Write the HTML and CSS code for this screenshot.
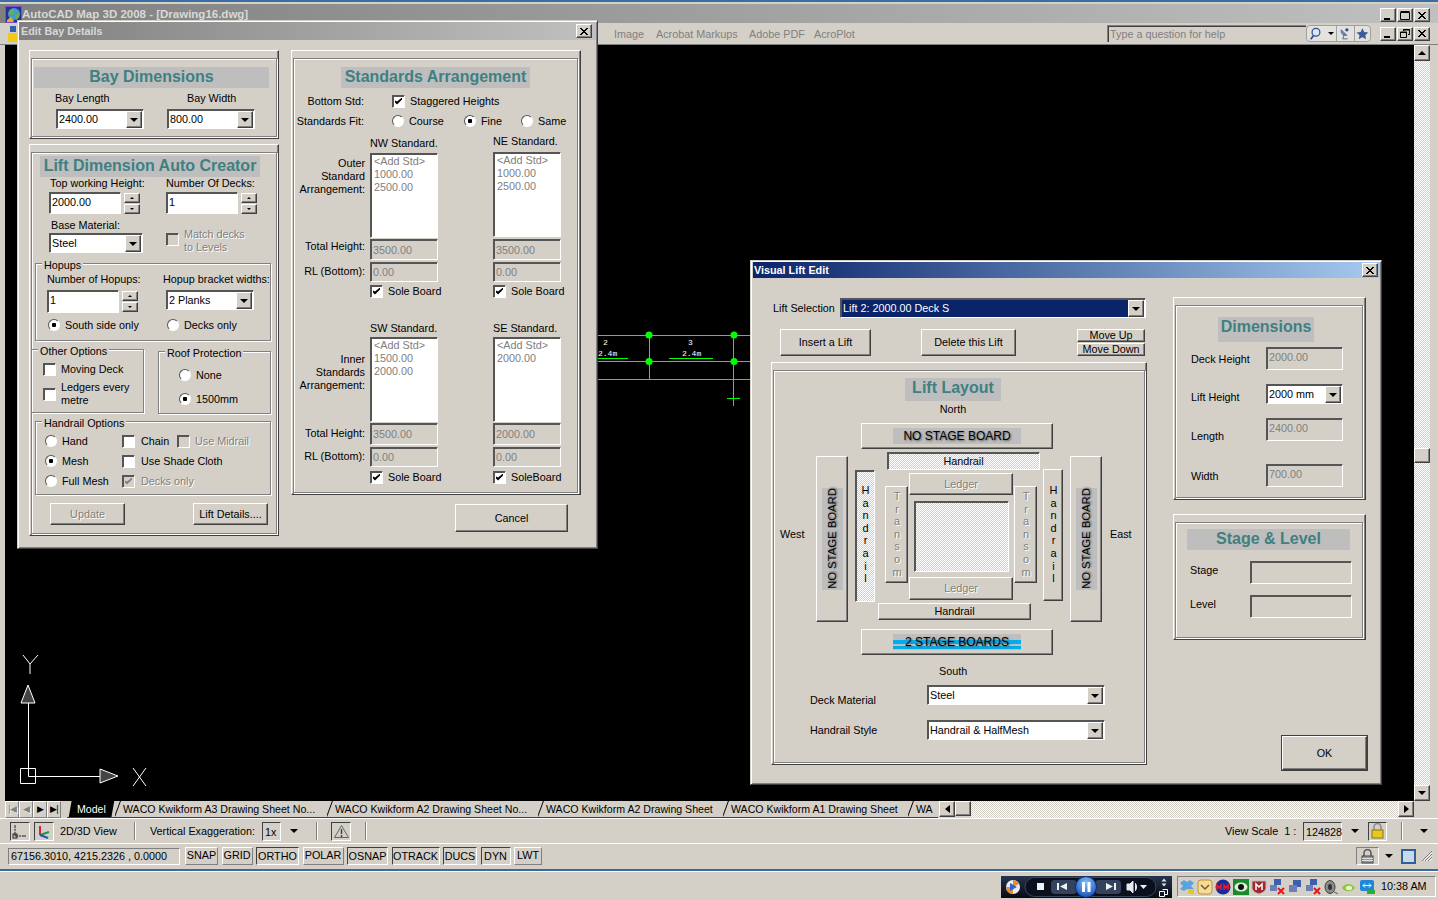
FILE: index.html
```html
<!DOCTYPE html>
<html lang="en">
<head>
    <meta charset="UTF-8">
    <title>AutoCAD Map 3D 2008 - [Drawing16.dwg]</title>
    <link rel="stylesheet" href="styles.css">
</head>
<body>

<svg class="defs" width="0" height="0">
    <symbol id="g-close" viewBox="0 0 10 9"><path d="M1 1l7 7M2 1l7 7M8 1L1 8M9 1L2 8" stroke="#000" fill="none"/></symbol>
    <symbol id="g-min" viewBox="0 0 10 9"><path d="M1 7h6v2H1z"/></symbol>
    <symbol id="g-max" viewBox="0 0 10 9"><path d="M0.5 1.5h9v7h-9zM0.5 0.5h9" stroke="#000" fill="none"/></symbol>
    <symbol id="g-restore" viewBox="0 0 10 9"><path d="M3.5 2V0.5h6v5H8M0.5 3h6v5.5h-6zM0.5 3.5h6M3.5 1h6" stroke="#000" fill="none"/></symbol>
</svg>

<div class="app">
    <div class="app-title">
        <svg class="app-icon" width="17" height="17" viewBox="0 0 17 17">
            <rect x="0.5" y="0.5" width="16" height="16" fill="#2b2f8f" stroke="#7b4fc9"/>
            <circle cx="9" cy="8" r="6" fill="#3f9ad6"/>
            <path d="M5 4c3-2 5 0 4 3s-4 2-5 1zM10 9l4-2v4l-3 3z" fill="#6ab04c"/>
            <path d="M2 14l4-3 3 4-1 1H2z" fill="#e8b020"/>
        </svg>
        <span class="app-name">AutoCAD Map 3D 2008 - [Drawing16.dwg]</span>
        <div class="win-btns">
            <span class="up win-btn"><svg width="10" height="9"><use href="#g-min"/></svg></span>
            <span class="up win-btn"><svg width="10" height="9"><use href="#g-max"/></svg></span>
            <span class="up win-btn"><svg width="10" height="9"><use href="#g-close"/></svg></span>
        </div>
    </div>

    <div class="menu-row">
        <svg class="menu-icon" width="10" height="16" viewBox="0 0 10 16"><path d="M0 7h10v9H0z" fill="#f2c81e"/><path d="M2 0h6v6H2z" fill="#2f5fb0"/></svg>
        <span class="menu-item m-image">Image</span>
        <span class="menu-item m-acro">Acrobat Markups</span>
        <span class="menu-item m-pdf">Adobe PDF</span>
        <span class="menu-item m-plot">AcroPlot</span>
        <div class="help-box">Type a question for help</div>
        <div class="help-pill">
            <svg width="20" height="15" viewBox="0 0 20 15"><circle cx="8" cy="6" r="4.5" fill="#dce8f8" stroke="#2d4f92" stroke-width="1.4"/><path d="M5 10l-3 4" stroke="#2d4f92" stroke-width="2"/></svg>
            <i class="tri tri-sm"></i>
            <svg class="pill-sep" width="18" height="15" viewBox="0 0 18 15"><path d="M5 2a6 6 0 0 0 8 8z" fill="#6d83b5"/><path d="M9 8l-2 6h6" stroke="#41557f" fill="none"/><circle cx="12" cy="3" r="2" fill="#2d4f92"/></svg>
            <svg class="pill-sep" width="18" height="15" viewBox="0 0 18 15"><path d="M9 1l2.2 4.6 5 .6-3.7 3.4 1 5L9 12.2 4.500 14.600l1-5L1.800 6.200l5-.6z" fill="#3d5c9c"/></svg>
        </div>
        <div class="win-btns">
            <span class="up win-btn"><svg width="10" height="9"><use href="#g-min"/></svg></span>
            <span class="up win-btn"><svg width="10" height="9"><use href="#g-restore"/></svg></span>
            <span class="up win-btn"><svg width="10" height="9"><use href="#g-close"/></svg></span>
        </div>
    </div>

    <div class="work">
        <svg class="drawing" viewBox="5 44 1409 756">
            <g class="ucs">
                <path d="M23 654l7 9 8-9M30 663v10M133 767l13 18M146 767l-13 18"/>
                <path class="ucs-arrow" d="M28 684l-7 18h14zM100 768v14l18-7z"/>
                <path d="M20.500 767.500h15v15h-15zM28.500 702v73.500H100"/>
            </g>
            <g class="green">
                <path d="M598 334.500h152M598 360.500h152M598 378.500h152M649.500 334v44M733.500 334v71M727 397.500h13M598 357.500h30M669 357.500h44"/>
                <circle cx="649" cy="334" r="3.500"/><circle cx="649" cy="360.500" r="3.500"/>
                <circle cx="734" cy="334" r="3.500"/><circle cx="734" cy="360.500" r="3.500"/>
            </g>
            <g class="dwg-text">
                <text x="603" y="344">2</text><text x="688" y="344">3</text>
                <text x="598" y="355">2.4m</text><text x="682" y="355">2.4m</text>
            </g>
        </svg>
        <div class="vscroll">
            <span class="up sb-btn"><i class="tri tri-up"></i></span>
            <div class="sb-track"><span class="up sb-thumb"></span></div>
            <span class="up sb-btn"><i class="tri"></i></span>
        </div>
    </div>

    <div class="tabs-row">
        <span class="nav-btn off">|◀</span><span class="nav-btn off">◀</span><span class="nav-btn">▶</span><span class="nav-btn">▶|</span>
        <div class="tab tab-model">Model</div>
        <div class="tab t-a3">WACO Kwikform A3 Drawing Sheet No...</div>
        <div class="tab t-a2">WACO Kwikform A2 Drawing Sheet No...</div>
        <div class="tab t-a2b">WACO Kwikform A2 Drawing Sheet</div>
        <div class="tab t-a2b">WACO Kwikform A1 Drawing Sheet</div>
        <div class="tab t-wa">WA</div>
        <div class="hscroll">
            <span class="up sb-btn"><i class="tri tri-left"></i></span>
            <span class="up sb-thumb"></span>
            <div class="sb-track"></div>
            <span class="up sb-btn"><i class="tri tri-right"></i></span>
        </div>
    </div>

    <div class="view-bar">
        <span class="tool tool-a"><svg width="16" height="15" viewBox="0 0 16 15"><path d="M3 1v11h11" stroke="#222" fill="none"/><path d="M6 12h1M9 12h1M3 4v1M3 7v1" stroke="#fff"/><rect x="1" y="10" width="4" height="4" fill="none" stroke="#222"/></svg></span>
        <span class="tool tool-b"><svg width="16" height="15" viewBox="0 0 16 15"><path d="M4 2v9" stroke="#d23" stroke-width="2"/><path d="M4 11l9-3" stroke="#1a9a3a" stroke-width="2"/><path d="M4 11l8 3" stroke="#2a4fc0" stroke-width="2"/></svg></span>
        <span class="vb-view">2D/3D View</span>
        <i class="sep"></i>
        <span class="vb-exag">Vertical Exaggeration:</span>
        <span class="down-thin vb-box vb-1x">1x</span>
        <i class="tri vb-arrow"></i>
        <i class="sep sep-a"></i>
        <span class="tool tool-warn"><svg width="17" height="15" viewBox="0 0 17 15"><path d="M8.500 1.500l7 12h-14z" fill="#d4d0c8" stroke="#666"/><path d="M8.500 5v5M8.500 11v2" stroke="#444" stroke-width="1.500"/></svg></span>
        <i class="sep sep-b"></i>
        <div class="vb-right">
            <span class="vb-scale">View Scale&nbsp; 1 :</span>
            <span class="down-thin vb-box vb-num">124828</span>
            <i class="tri vb-arrow"></i>
            <span class="tool tool-lock"><svg width="15" height="16" viewBox="0 0 15 16"><path d="M4 7V4a3.500 3.500 0 0 1 7 0v3" stroke="#8a8a8a" stroke-width="1.500" fill="none"/><rect x="2" y="7" width="11" height="8" fill="#e8c820" stroke="#8a7410"/></svg></span>
            <i class="sep sep-c"></i>
            <i class="tri vb-last"></i>
        </div>
    </div>

    <div class="status-bar">
        <div class="coords">67156.3010, 4215.2326 , 0.0000</div>
        <div class="snaps">
            <span class="snap">SNAP</span>
            <span class="snap">GRID</span>
            <span class="snap on">ORTHO</span>
            <span class="snap">POLAR</span>
            <span class="snap on">OSNAP</span>
            <span class="snap on">OTRACK</span>
            <span class="snap on">DUCS</span>
            <span class="snap on">DYN</span>
            <span class="snap">LWT</span>
        </div>
        <div class="status-right">
            <span class="tool tool-slock"><svg width="15" height="15" viewBox="0 0 15 15"><path d="M4 7V4a3.500 3.500 0 0 1 7 0v3" stroke="#555" stroke-width="1.500" fill="none"/><rect x="2" y="7" width="11" height="7" fill="#9a9a9a" stroke="#444"/><path d="M2 9.500h11M2 11.500h11" stroke="#ddd"/></svg></span>
            <i class="tri st-arrow"></i>
            <span class="st-square"></span>
            <svg class="grip" width="12" height="12" viewBox="0 0 12 12"><path d="M11 1L1 11M11 4l-7 7M11 7l-4 4" stroke="#808080"/><path d="M11 2.500L2.500 11M11 5.500L5.500 11M11 8.500L8.500 11" stroke="#fff"/></svg>
        </div>
    </div>
</div>

<div class="taskbar">
    <svg class="player" width="171" height="22" viewBox="0 0 171 22">
        <defs>
            <linearGradient id="pl-bg" x1="0" y1="0" x2="0" y2="1"><stop offset="0" stop-color="#27344c"/><stop offset="1" stop-color="#060a14"/></linearGradient>
            <radialGradient id="pl-blue" cx="0.500" cy="0.300" r="0.800"><stop offset="0" stop-color="#7fc4ff"/><stop offset="1" stop-color="#0a3fb0"/></radialGradient>
        </defs>
        <rect width="171" height="22" fill="url(#pl-bg)"/>
        <circle cx="12" cy="11" r="7" fill="#e9edf5"/>
        <path d="M12 4a7 7 0 0 1 6 4l-6 3zM5 11a7 7 0 0 0 7 7l0-7z" fill="#f08a1e"/>
        <path d="M9 7l7 4-7 4z" fill="#2a63d8"/>
        <rect x="24" y="1.500" width="131" height="19" rx="9.500" fill="#0a101d" stroke="#3a465c"/>
        <rect x="36" y="7" width="7" height="7" fill="#eef1f5"/>
        <rect x="50" y="4" width="26" height="14" rx="4" fill="#34435d"/>
        <path d="M58 7v7h-2V7zM66 7v7l-7-3.500z" fill="#eef1f5"/>
        <rect x="94" y="4" width="26" height="14" rx="4" fill="#34435d"/>
        <path d="M105 7l7 3.500-7 3.500zM113 7h2v7h-2z" fill="#eef1f5"/>
        <circle cx="85" cy="11" r="10.500" fill="url(#pl-blue)" stroke="#0f2a70"/>
        <path d="M81 6h3v10h-3zM86.500 6h3v10h-3z" fill="#fff"/>
        <path d="M126 8h3l3-3v12l-3-3h-3zM134 7c2 2 2 6 0 8" fill="#e6eaf0" stroke="#e6eaf0"/>
        <path d="M139 9h7l-3.500 4z" fill="#eef1f5"/>
        <path d="M163 2.500l-2.500 3h5zM163 10.500l-2.500-3h5z" fill="#dfe4ec"/>
        <path d="M158.500 15.500h5v5h-5zM161.500 13.500h5v5h-3" stroke="#fff" fill="none"/>
    </svg>
    <div class="tray">
        <svg width="16" height="16" viewBox="0 0 16 16"><path d="M1 4l4-3 3 2 3-2 4 3-3 3 3 3-4 2-3-2-3 2-4-2 3-3z" fill="#5aa3de"/><rect x="9" y="10" width="6" height="5" fill="#e8c820"/></svg>
        <svg width="16" height="16" viewBox="0 0 16 16"><rect x="1" y="1" width="14" height="14" rx="3" fill="#f2dca0" stroke="#c89020"/><path d="M4 6l4 4 4-4" stroke="#805a10" stroke-width="1.500" fill="none"/></svg>
        <svg width="16" height="16" viewBox="0 0 16 16"><circle cx="8" cy="8" r="7.500" fill="#1a2a9a"/><path d="M2 11V6l2 3 2-3v5M9 11V6l2 3 2-3v5" stroke="#f01818" stroke-width="1.500" fill="none"/></svg>
        <svg width="16" height="16" viewBox="0 0 16 16"><rect width="16" height="16" fill="#1a8a2e"/><ellipse cx="8" cy="8" rx="6.500" ry="4.500" fill="#dff2d8"/><circle cx="8" cy="8" r="3" fill="#101010"/></svg>
        <svg width="16" height="16" viewBox="0 0 16 16"><path d="M1 2h14v7c0 3-4 5-7 6-3-1-7-3-7-6z" fill="#a5262c" stroke="#bbb"/><path d="M5 11V5l3 3 3-3v6" stroke="#fff" stroke-width="1.500" fill="none"/></svg>
        <svg width="16" height="16" viewBox="0 0 16 16"><rect x="5" y="0" width="7" height="6" fill="#3f5fae"/><rect x="1" y="6" width="7" height="6" fill="#6a7fb8"/><path d="M9 9l6 6M15 9l-6 6" stroke="#e81818" stroke-width="2"/></svg>
        <svg width="16" height="16" viewBox="0 0 16 16"><rect x="6" y="1" width="8" height="7" fill="#3f5fae"/><rect x="2" y="6" width="8" height="7" fill="#6a7fb8"/></svg>
        <svg width="16" height="16" viewBox="0 0 16 16"><rect x="5" y="0" width="7" height="6" fill="#3f5fae"/><rect x="1" y="6" width="7" height="6" fill="#6a7fb8"/><path d="M9 9l6 6M15 9l-6 6" stroke="#e81818" stroke-width="2"/></svg>
        <svg width="16" height="16" viewBox="0 0 16 16"><ellipse cx="7" cy="8" rx="5" ry="6.500" fill="#8a8a8a" stroke="#444"/><ellipse cx="7" cy="8" rx="2" ry="3" fill="#333"/><path d="M11 13c2 1 3 1 4 2" stroke="#555"/></svg>
        <svg width="16" height="16" viewBox="0 0 18 16"><path d="M1 9c4-6 10-6 15 0-5 5-11 5-15 0z" fill="#8cc63f"/><ellipse cx="9" cy="9" rx="3.500" ry="2.500" fill="#e4f4c8"/></svg>
        <svg width="16" height="16" viewBox="0 0 16 16"><rect x="1" y="1" width="14" height="11" rx="2" fill="#1e88d8"/><path d="M4 6.500h8M6 4.500l-2 2 2 2M10 4.500l2 2-2 2" stroke="#fff" fill="none"/><rect x="8" y="11" width="8" height="4" fill="#2caa3a"/></svg>
        <span class="clock">10:38 AM</span>
    </div>
</div>

<!-- Edit Bay Details -->
<section class="win bay-win">
    <header class="cap cap-off">
        <span>Edit Bay Details</span>
        <span class="up cap-x"><svg width="10" height="9"><use href="#g-close"/></svg></span>
    </header>
    <div class="bay-body">
        <div class="bay-left">
            <div class="panel p-bay"><div class="frame">
                <h2 class="strip s-bay">Bay Dimensions</h2>
                <div class="bay-grid">
                    <span class="l-len">Bay Length</span>
                    <span class="l-wid">Bay Width</span>
                    <div class="combo"><span class="combo-val">2400.00</span><span class="up combo-btn"><i class="tri"></i></span></div>
                    <div class="combo"><span class="combo-val">800.00</span><span class="up combo-btn"><i class="tri"></i></span></div>
                </div>
            </div></div>

            <div class="panel p-lift"><div class="frame">
                <h2 class="strip s-lift">Lift Dimension Auto Creator</h2>
                <div class="auto-grid">
                    <span class="auto-lbl">Top working Height:</span>
                    <span class="auto-lbl2">Number Of Decks:</span>
                    <div class="spinner"><span class="input">2000.00</span><span class="spin"><span class="up"><i class="tri tri-up tri-xs"></i></span><span class="up"><i class="tri tri-xs"></i></span></span></div>
                    <div class="spinner"><span class="input">1</span><span class="spin"><span class="up"><i class="tri tri-up tri-xs"></i></span><span class="up"><i class="tri tri-xs"></i></span></span></div>
                    <span class="auto-base">Base Material:</span>
                    <span></span>
                    <div class="combo c-base"><span class="combo-val">Steel</span><span class="up combo-btn"><i class="tri"></i></span></div>
                    <div class="opt opt-top off"><i class="box"></i><span>Match decks<br>to Levels</span></div>
                </div>

                <fieldset class="grp g-hop">
                    <legend>Hopups</legend>
                    <div class="hop-grid">
                        <span>Number of Hopups:</span>
                        <span>Hopup bracket widths:</span>
                        <div class="spinner"><span class="input i-hop">1</span><span class="spin"><span class="up"><i class="tri tri-up tri-xs"></i></span><span class="up"><i class="tri tri-xs"></i></span></span></div>
                        <div class="combo c-plank"><span class="combo-val">2 Planks</span><span class="up combo-btn"><i class="tri"></i></span></div>
                        <div class="opt opt-a"><i class="radio on"></i><span>South side only</span></div>
                        <div class="opt opt-b"><i class="radio"></i><span>Decks only</span></div>
                    </div>
                </fieldset>

                <div class="grp-pair">
                    <fieldset class="grp g-other">
                        <legend>Other Options</legend>
                        <div class="opt o-move"><i class="box"></i><span>Moving Deck</span></div>
                        <div class="opt o-ledg"><i class="box"></i><span>Ledgers every<br>metre</span></div>
                    </fieldset>
                    <fieldset class="grp g-roof">
                        <legend>Roof Protection</legend>
                        <div class="opt o-none"><i class="radio"></i><span>None</span></div>
                        <div class="opt o-1500"><i class="radio on"></i><span>1500mm</span></div>
                    </fieldset>
                </div>

                <fieldset class="grp g-rail">
                    <legend>Handrail Options</legend>
                    <div class="rail-grid">
                        <div class="opt"><i class="radio"></i><span>Hand</span></div>
                        <div class="opt"><i class="box"></i><span class="gap-chain">Chain</span></div>
                        <div class="opt off"><i class="box"></i><span>Use Midrail</span></div>
                        <div class="opt"><i class="radio on"></i><span>Mesh</span></div>
                        <div class="opt wide"><i class="box"></i><span class="gap-chain">Use Shade Cloth</span></div>
                        <div class="opt"><i class="radio"></i><span>Full Mesh</span></div>
                        <div class="opt wide off"><i class="box on"></i><span class="gap-chain">Decks only</span></div>
                    </div>
                </fieldset>

                <div class="bay-btns">
                    <span class="up btn b-update off">Update</span>
                    <span class="up btn b-details">Lift Details....</span>
                </div>
            </div></div>
        </div>

        <div class="bay-right">
            <div class="panel p-std"><div class="frame">
                <h2 class="strip s-std">Standards Arrangement</h2>
                <div class="std-top">
                    <span class="std-lbl">Bottom Std:</span>
                    <div class="opt wide"><i class="box on"></i><span>Staggered Heights</span></div>
                    <span class="std-lbl">Standards Fit:</span>
                    <div class="opt"><i class="radio"></i><span>Course</span></div>
                    <div class="opt"><i class="radio on"></i><span>Fine</span></div>
                    <div class="opt"><i class="radio"></i><span>Same</span></div>
                </div>

                <div class="std-grid">
                    <div class="std-lbls">
                        <div class="std-block">Outer<br>Standard<br>Arrangement:</div>
                        <div class="std-tot">Total Height:</div>
                        <div class="std-rl">RL (Bottom):</div>
                    </div>
                    <div class="std-col">
                        <span class="std-head">NW Standard.</span>
                        <div class="list">&lt;Add Std&gt;<br>1000.00<br>2500.00</div>
                        <span class="input ro">3500.00</span>
                        <span class="input ro i-rl">0.00</span>
                        <div class="opt opt-sole"><i class="box on"></i><span>Sole Board</span></div>
                    </div>
                    <span></span>
                    <div class="std-col ne">
                        <span class="std-head">NE Standard.</span>
                        <div class="list">&lt;Add Std&gt;<br>1000.00<br>2500.00</div>
                        <span class="input ro">3500.00</span>
                        <span class="input ro i-rl">0.00</span>
                        <div class="opt opt-sole"><i class="box on"></i><span>Sole Board</span></div>
                    </div>
                </div>

                <div class="std-grid low">
                    <div class="std-lbls">
                        <div class="std-block">Inner<br>Standards<br>Arrangement:</div>
                        <div class="std-tot">Total Height:</div>
                        <div class="std-rl">RL (Bottom):</div>
                    </div>
                    <div class="std-col">
                        <span class="std-head">SW Standard.</span>
                        <div class="list">&lt;Add Std&gt;<br>1500.00<br>2000.00</div>
                        <span class="input ro">3500.00</span>
                        <span class="input ro i-rl">0.00</span>
                        <div class="opt opt-sole"><i class="box on"></i><span>Sole Board</span></div>
                    </div>
                    <span></span>
                    <div class="std-col">
                        <span class="std-head">SE Standard.</span>
                        <div class="list">&lt;Add Std&gt;<br>2000.00</div>
                        <span class="input ro">2000.00</span>
                        <span class="input ro i-rl">0.00</span>
                        <div class="opt opt-sole"><i class="box on"></i><span>SoleBoard</span></div>
                    </div>
                </div>
            </div></div>
            <span class="up btn b-cancel">Cancel</span>
        </div>
    </div>
</section>

<!-- Visual Lift Edit -->
<section class="win lift-win">
    <header class="cap cap-on">
        <span>Visual Lift Edit</span>
        <span class="up cap-x"><svg width="10" height="9"><use href="#g-close"/></svg></span>
    </header>
    <div class="lift-body">
        <div class="lift-main">
            <div class="sel-row">
                <span class="sel-lbl">Lift Selection</span>
                <div class="combo c-sel"><span class="combo-val sel">Lift 2: 2000.00 Deck S</span><span class="up combo-btn"><i class="tri"></i></span></div>
            </div>
            <div class="lift-btns">
                <span class="up btn b-insert">Insert a Lift</span>
                <span class="up btn b-delete">Delete this Lift</span>
                <div class="move-btns">
                    <span class="up btn">Move Up</span>
                    <span class="up btn">Move Down</span>
                </div>
            </div>

            <div class="panel p-layout"><div class="frame">
                <h2 class="strip s-layout">Lift Layout</h2>
                <div class="north">North</div>
                <div class="plan">
                    <div class="up piece pc-nboard"><span class="bstrip">NO STAGE BOARD</span></div>
                    <div class="well piece pc-nrail">Handrail</div>
                    <div class="up piece pc-wboard"><span class="bstrip vert">NO STAGE BOARD</span></div>
                    <div class="well piece pc-wrail"><span class="upright">Handrail</span></div>
                    <div class="up piece pc-wtrans off"><span class="upright">Transom</span></div>
                    <div class="up piece pc-nledger off">Ledger</div>
                    <div class="well piece pc-deck"></div>
                    <div class="up piece pc-sledger off">Ledger</div>
                    <div class="up piece pc-etrans off"><span class="upright">Transom</span></div>
                    <div class="up piece pc-erail"><span class="upright">Handrail</span></div>
                    <div class="up piece pc-eboard"><span class="bstrip vert">NO STAGE BOARD</span></div>
                    <div class="up piece pc-srail">Handrail</div>
                    <div class="up piece pc-sboard"><span class="bstrip blue">2 STAGE BOARDS</span></div>
                    <span class="piece pc-west">West</span>
                    <span class="piece pc-east">East</span>
                    <span class="piece pc-south">South</span>
                </div>
                <div class="mat-grid">
                    <span class="m-deck">Deck Material</span>
                    <div class="combo"><span class="combo-val">Steel</span><span class="up combo-btn"><i class="tri"></i></span></div>
                    <span class="m-rail">Handrail Style</span>
                    <div class="combo"><span class="combo-val">Handrail &amp; HalfMesh</span><span class="up combo-btn"><i class="tri"></i></span></div>
                </div>
            </div></div>
        </div>

        <div class="lift-side">
            <div class="panel p-dims"><div class="frame">
                <h2 class="strip s-dims">Dimensions</h2>
                <div class="dim-row d-deck"><span>Deck Height</span><span class="input ro">2000.00</span></div>
                <div class="dim-row d-lift"><span>Lift Height</span><div class="combo"><span class="combo-val">2000 mm</span><span class="up combo-btn"><i class="tri"></i></span></div></div>
                <div class="dim-row d-len"><span>Length</span><span class="input ro">2400.00</span></div>
                <div class="dim-row d-wid"><span>Width</span><span class="input ro">700.00</span></div>
            </div></div>
            <div class="panel p-stage"><div class="frame">
                <h2 class="strip s-stage">Stage &amp; Level</h2>
                <div class="stage-row"><span>Stage</span><span class="input ro"></span></div>
                <div class="stage-row"><span>Level</span><span class="input ro"></span></div>
            </div></div>
            <span class="up btn b-ok">OK</span>
        </div>
    </div>
</section>

</body>
</html>
```

FILE: styles.css
```css
* {
    box-sizing: border-box;
}

html,
body {
    margin: 0;
    width: 1438px;
    height: 900px;
    overflow: hidden;
}

body {
    position: relative;
    background-color: #d4d0c8;
    color: #000;
    font: 10.800px/13px "Liberation Sans", Arial, sans-serif;
}

.defs {
    position: absolute;
}

i {
    display: block;
    font-style: normal;
}

/* shared 3d edges */
.up {
    background-color: #d4d0c8;
    border: 1px solid;
    border-color: #fff #404040 #404040 #fff;
    box-shadow: inset -1px -1px 0 #808080;
    display: flex;
    align-items: center;
    justify-content: center;
}

.input,
.combo,
.list,
.well {
    border: 1px solid;
    border-color: #555 #fff #fff #555;
    box-shadow: inset 1px 1px 0 #555;
}

.off,
.off span {
    color: #808080;
    text-shadow: 1px 1px 0 #fff;
}

.tri {
    width: 0;
    height: 0;
    border-left: 4px solid transparent;
    border-right: 4px solid transparent;
    border-top: 4px solid #000;
}

.tri-up {
    border-top: 0;
    border-bottom: 4px solid #000;
}

.tri-left {
    border: 4px solid transparent;
    border-left: 0;
    border-right: 5px solid #000;
}

.tri-right {
    border: 4px solid transparent;
    border-right: 0;
    border-left: 5px solid #000;
}

.tri-xs {
    border-left-width: 2px;
    border-right-width: 2px;
    border-top-width: 2px;
}

.tri-xs.tri-up {
    border-top-width: 0;
    border-bottom-width: 2px;
}

.tri-sm {
    border-left-width: 3px;
    border-right-width: 3px;
    border-top-width: 3px;
}

/* main window */
.app {
    height: 869px;
    display: flex;
    flex-direction: column;
    border-top: 2px solid #3a6ea5;
}

.app-title {
    flex: 0 0 18px;
    margin-top: 2px;
    padding: 0 8px 0 5px;
    display: flex;
    align-items: center;
    background: linear-gradient(90deg, #808080, #c0c0c0);
}

.app-icon {
    margin-top: 2px;
}

.app-name {
    padding-top: 2px;
    color: #d8d8d8;
    font-weight: bold;
    font-size: 11.500px;
}

.win-btns {
    margin-left: auto;
    display: flex;
    gap: 1px;
}

.app-title .win-btns {
    margin-top: 3px;
}

.win-btn {
    width: 16px;
    height: 14px;
}

.menu-row {
    flex: 0 0 21px;
    padding: 0 8px 0 8px;
    display: flex;
    align-items: center;
    color: #808080;
    white-space: nowrap;
}

.menu-item {
    padding-top: 1px;
}

.m-image { margin-left: 596px; width: 42px; }
.m-acro { width: 93px; }
.m-pdf { width: 65px; }

.help-box {
    margin-left: auto;
    width: 199px;
    height: 17px;
    padding: 2px 2px;
    border: 1px solid #808080;
    border-right: 0;
    border-bottom: 0;
    box-shadow: inset 1px 1px 0 #404040;
}

.help-pill {
    width: 65px;
    height: 17px;
    display: flex;
    align-items: center;
    gap: 2px;
    padding-left: 2px;
    border: 1px solid #a0a0a0;
    border-radius: 4px;
    background: #e4e2dc;
}

.pill-sep {
    border-left: 1px solid #a0a0a0;
}

.help-pill + .win-btns {
    margin-left: 9px;
}

.work {
    flex: 0 0 757px;
    display: flex;
    padding: 0 8px 0 5px;
    border-top: 1px solid #808080;
}

.drawing {
    flex: 1;
    display: block;
    height: 756px;
    background: #000;
}

.ucs {
    stroke: #fff;
    fill: none;
}

.ucs .ucs-arrow {
    fill: #444;
}

.green {
    stroke: #0f0;
    fill: none;
}

.green circle {
    fill: #0f0;
    stroke: none;
}

.dwg-text {
    fill: #fff;
    font: 8px "Liberation Mono", monospace;
}

.vscroll {
    width: 16px;
    height: 756px;
    display: flex;
    flex-direction: column;
}

.sb-btn {
    flex: 0 0 16px;
    height: 16px;
}

.sb-track {
    flex: 1;
    background: repeating-conic-gradient(#fff 0 25%, #d4d0c8 0 50%) 0 0 / 2px 2px;
}

.vscroll .sb-track {
    padding-top: 387px;
}

.sb-thumb {
    display: block;
    width: 16px;
    height: 15px;
}

.tabs-row {
    flex: 0 0 17px;
    padding-left: 5px;
    display: flex;
    align-items: stretch;
}

.nav-btn {
    width: 14px;
    border: 1px solid #808080;
    border-color: #fff #808080 #808080 #fff;
    font-size: 9px;
    text-align: center;
    line-height: 15px;
    letter-spacing: -1px;
}

.nav-btn.off {
    color: #808080;
}

.tab {
    position: relative;
    padding: 2px 0 0 8px;
    border-bottom: 1px solid #404040;
    font-size: 10.600px;
    white-space: nowrap;
    overflow: hidden;
}

.tab::before {
    content: "";
    position: absolute;
    left: 2px;
    top: -1px;
    bottom: -1px;
    border-left: 1px solid #000;
    transform: skewX(-20deg);
}

.tab-model {
    margin-left: 6px;
    width: 48px;
    padding-left: 10px;
    background: linear-gradient(100deg, transparent 8%, #000 10%, #000 92%, transparent 94%);
    color: #fff;
}

.tab-model::before {
    display: none;
}

.t-a3 { width: 212px; }
.t-a2 { width: 211px; }
.t-a2b { width: 185px; }
.t-wa { width: 30px; }

.hscroll {
    width: 475px;
    display: flex;
    margin-left: 1px;
}

.hscroll .sb-btn {
    width: 16px;
}

.view-bar {
    flex: 0 0 26px;
    padding-left: 10px;
    display: flex;
    align-items: center;
    border-top: 1px solid #fff;
    border-bottom: 1px solid #fff;
}

.tool {
    width: 20px;
    height: 19px;
    display: flex;
    align-items: center;
    justify-content: center;
    border: 1px solid;
    border-color: #404040 #fff #fff #404040;
}

.tool-b { margin-left: 4px; }
.vb-view { margin-left: 6px; width: 74px; }
.sep { width: 1px; height: 18px; background: #808080; box-shadow: 1px 0 0 #fff; }
.vb-exag { margin-left: 15px; width: 112px; }

.down-thin,
.coords {
    border: 1px solid;
    border-color: #404040 #fff #fff #404040;
}

.vb-box {
    height: 19px;
    padding: 3px 2px;
}

.vb-1x { width: 19px; }
.vb-num { width: 39px; }
.vb-arrow { margin-left: 9px; }
.sep-a { margin-left: 18px; }
.tool-warn { margin-left: 14px; }
.sep-b { margin-left: 14px; }

.vb-right {
    margin-left: auto;
    padding-right: 10px;
    display: flex;
    align-items: center;
}

.vb-scale { width: 78px; }
.tool-lock { margin-left: 9px; width: 19px; }
.sep-c { margin-left: 14px; }
.vb-last { margin-left: 18px; }

.status-bar {
    flex: 0 0 26px;
    padding: 0 5px 2px 8px;
    display: flex;
    align-items: center;
}

.coords {
    width: 172px;
    height: 17px;
    padding: 1px 2px;
    border-color: #808080 #fff #fff #808080;
}

.snaps {
    margin-left: 5px;
    display: grid;
    grid-template-columns: 33px 31px 43px 41px 41px 48px 34px 30px 28px;
    column-gap: 3.500px;
}

.snap {
    height: 18px;
    line-height: 15px;
    text-align: center;
    border: 1px solid;
    border-color: #fff #808080 #808080 #fff;
}

.snap.on {
    border-color: #404040 #fff #fff #404040;
    line-height: 17px;
}

.status-right {
    margin-left: auto;
    display: flex;
    align-items: center;
}

.tool-slock { width: 23px; height: 18px; border-color: #808080 #fff #fff #808080; }
.st-arrow { margin-left: 6px; }

.st-square {
    margin-left: 8px;
    width: 15px;
    height: 15px;
    border: 2px solid #2d5f9a;
    background: #c7d8ea;
}

.grip { margin-left: 5px; }

.taskbar {
    height: 31px;
    padding: 5px 2px 0 0;
    display: flex;
    justify-content: flex-end;
    align-items: flex-start;
    border-top: 2px solid #3a6a9e;
    box-shadow: inset 0 1px 0 #fff;
}

.player {
    display: block;
}

.tray {
    margin-left: 5px;
    width: 259px;
    height: 21px;
    padding: 2px 0 0 1px;
    display: flex;
    gap: 2px;
    border: 1px solid;
    border-color: #808080 #fff #fff #808080;
    white-space: nowrap;
}

.tray svg {
    flex: none;
}

.clock {
    margin-left: 4px;
    line-height: 15px;
}

/* dialogs */
.win {
    position: absolute;
    background: #d4d0c8;
    border: 1px solid;
    border-color: #d4d0c8 #404040 #404040 #d4d0c8;
    box-shadow: inset 1px 1px 0 #fff, inset -1px -1px 0 #808080;
}

.cap {
    display: flex;
    align-items: center;
    justify-content: space-between;
    font-weight: bold;
    padding: 0 2px 0 2px;
}

.cap-off {
    height: 18px;
    padding-right: 4px;
    color: #d8d8d8;
    background: linear-gradient(90deg, #808080, #c0c0c0);
}

.cap-on {
    height: 16px;
    padding-left: 1px;
    color: #fff;
    background: linear-gradient(90deg, #0a246a, #a6caf0);
}

.cap-x {
    width: 16px;
    height: 14px;
}

.panel {
    border-top: 1px solid #fff;
    border-left: 1px solid #fff;
    border-right: 1px solid #404040;
    border-bottom: 1px solid #404040;
    padding: 7px 1px 1px 1px;
    box-shadow: inset -1px -1px 0 #808080;
}

.frame {
    height: 100%;
    border: 1px solid #808080;
    box-shadow: inset 1px 1px 0 #fff, 1px 1px 0 #fff;
}

.strip {
    margin: 0;
    height: 21px;
    background: #bebebe;
    color: #408080;
    font: bold 16px/19px "Liberation Sans", Arial, sans-serif;
    text-align: center;
}

.combo {
    height: 20px;
    display: flex;
    background: #fff;
    padding: 1px 1px 0 1px;
}

.combo-val {
    flex: 1;
    padding: 2px 0 0 1px;
    white-space: nowrap;
    overflow: hidden;
}

.combo-btn {
    width: 16px;
    height: 17px;
}

.input {
    display: block;
    height: 23px;
    padding: 3px 2px;
    background: #fff;
}

.input.ro {
    background: #d4d0c8;
    color: #808080;
}

.list {
    background: #fff;
    color: #808080;
    padding: 1px 3px;
}

.spinner {
    display: flex;
    gap: 3px;
}

.spin {
    width: 16px;
    display: flex;
    flex-direction: column;
    justify-content: center;
    gap: 1px;
}

.spin .up {
    height: 10px;
}

.opt {
    display: flex;
    align-items: center;
    gap: 5px;
    white-space: nowrap;
}

.box {
    flex: 0 0 13px;
    position: relative;
    height: 13px;
    background: #fff;
    border: 1px solid;
    border-color: #555 #fff #fff #555;
    box-shadow: inset 1px 1px 0 #555;
}

.box.on::after {
    content: "";
    position: absolute;
    left: 2px;
    top: 2px;
    width: 7px;
    height: 7px;
    background: #000;
    clip-path: polygon(0 43%, 0 71%, 29% 100%, 100% 29%, 100% 0, 29% 57%);
}

.off .box {
    background: #d4d0c8;
}

.off .box.on::after {
    background: #808080;
}

.radio {
    flex: 0 0 12px;
    height: 12px;
    border-radius: 50%;
    background: #fff;
    border: 1px solid;
    border-color: #555 #fff #fff #555;
    box-shadow: 0 0 0 0.500px #d4d0c8;
}

.radio.on {
    background: radial-gradient(circle, #000 0 2px, #fff 2.500px);
}

.btn {
    text-align: center;
}

/* edit bay dialog */
.bay-win {
    left: 17px;
    top: 20px;
    width: 581px;
    height: 529px;
    padding: 1px;
}

.bay-body {
    padding: 10px 0 0 10px;
    display: flex;
    gap: 12px;
}

.bay-left {
    width: 250px;
}

.p-bay {
    height: 89px;
}

.s-bay {
    margin: 8px 7px 0 2px;
}

.bay-grid {
    margin-top: 4px;
    padding-left: 24px;
    display: grid;
    grid-template-columns: 88px 88px;
    column-gap: 23px;
    row-gap: 4px;
}

.l-len { margin-left: -1px; }
.l-wid { margin-left: 20px; }

.p-lift {
    margin-top: 5px;
    height: 392px;
}

.s-lift {
    margin: 3px 16px 0 8px;
}

.auto-grid {
    padding-left: 17px;
    display: grid;
    grid-template-columns: 117px 1fr;
    grid-template-rows: 15px 22px 20px 20px;
}

.auto-lbl { margin-left: 1px; }

.auto-grid .input {
    width: 72px;
    height: 22px;
}

.auto-base {
    margin: 5px 0 0 2px;
}

.auto-grid .combo {
    margin-top: -1px;
}

.c-base {
    width: 94px;
}

.opt-top {
    align-items: flex-start;
    margin-top: -1px;
}

.opt-top span {
    margin-top: -5px;
}

.grp {
    margin: 0;
    padding: 0;
    border: 1px solid #808080;
    box-shadow: 1px 1px 0 #fff, inset 1px 1px 0 #fff;
}

.grp legend {
    margin-left: 6px;
    padding: 4px 2px 0;
    background: linear-gradient(transparent 4px, #d4d0c8 4px);
    line-height: 13px;
}

.g-hop {
    margin: 1px 0 0 3px;
    width: 236px;
    height: 86px;
}

.hop-grid {
    padding-left: 11px;
    display: grid;
    grid-template-columns: 116px 1fr;
}

.hop-grid > span {
    white-space: nowrap;
    margin-top: 1px;
    height: 17px;
}

.i-hop {
    width: 72px;
}

.c-plank {
    margin-left: 3px;
    width: 88px;
}

.opt-a { margin: 4px 0 0 1px; height: 16px; }
.opt-b { margin: 4px 0 0 4px; height: 16px; }

.grp-pair {
    height: 72px;
    display: flex;
    gap: 14px;
    margin-left: -1px;
}

.g-other {
    width: 113px;
    height: 72px;
    padding-left: 11px;
}

.grp.g-other legend {
    margin-left: -5px;
}

.g-roof {
    margin-top: 2px;
    width: 113px;
    height: 71px;
    padding-left: 20px;
}

.grp.g-roof legend {
    margin-left: -14px;
}

.o-move { margin-top: 4px; height: 14px; }
.o-ledg { margin-top: 5px; height: 26px; }
.o-none { margin-top: 8px; height: 14px; }
.o-1500 { margin-top: 10px; height: 14px; }

.g-rail {
    margin-left: 3px;
    width: 236px;
    height: 82px;
}

.rail-grid {
    margin-top: 1px;
    padding-left: 9px;
    display: grid;
    grid-template-columns: 77px 55px 1fr;
    grid-auto-rows: 20px;
}

.rail-grid .wide {
    grid-column: span 2;
}

.gap-chain {
    margin-left: 1px;
}

.bay-btns {
    margin-top: 8px;
    padding-left: 18px;
    display: flex;
    gap: 68px;
}

.bay-btns .btn {
    width: 75px;
    height: 22px;
}

.bay-right {
    width: 290px;
}

.p-std {
    height: 445px;
    padding-right: 2px;
}

.s-std {
    margin: 8px 0 0 47px;
    width: 189px;
}

.std-top {
    margin-top: 3px;
    display: grid;
    grid-template-columns: 98px 72px 57px 1fr;
    grid-auto-rows: 20px;
    align-items: center;
}

.std-top .wide {
    grid-column: span 3;
}

.std-lbl {
    padding-right: 28px;
    text-align: right;
    white-space: nowrap;
}

.std-grid {
    margin-top: 6px;
    display: grid;
    grid-template-columns: 76px 68px 55px 68px;
}

.std-grid.low {
    margin-top: 24px;
}

.std-col {
    display: flex;
    flex-direction: column;
}

.std-col.ne {
    margin-top: -2px;
}

.std-head {
    height: 16px;
    white-space: nowrap;
}

.ne .std-head {
    height: 17px;
}

.low .std-head {
    height: 15px;
}

.list {
    height: 85px;
}

.std-col .input {
    height: 21px;
    margin-top: 1px;
    padding: 4px 2px;
}

.ne .input {
    margin-top: 2px;
}

.std-col .i-rl {
    height: 20px;
    margin-top: 2px;
    padding: 3px 2px;
}

.opt-sole {
    margin-top: 2px;
    height: 14px;
}

.low .std-col .input {
    height: 22px;
}

.low .std-col .i-rl {
    height: 20px;
    margin-top: 2px;
}

.low .opt-sole {
    margin-top: 3px;
}

.std-lbls {
    padding: 16px 5px 0 0;
    text-align: right;
    white-space: nowrap;
}

.low .std-lbls {
    padding-top: 15px;
}

.std-block {
    height: 86px;
    padding-top: 4px;
}

.low .std-block {
    padding-top: 16px;
}

.std-tot {
    height: 23px;
    padding-top: 1px;
}

.std-rl {
    padding-top: 3px;
}

.low .std-tot {
    height: 24px;
    padding-top: 4px;
}

.b-cancel {
    margin: 9px 0 0 164px;
    width: 113px;
    height: 28px;
}

/* visual lift dialog */
.lift-win {
    left: 750px;
    top: 260px;
    width: 632px;
    height: 525px;
    padding: 1px 1px 1px 2px;
}

.lift-body {
    padding: 19px 0 0 18px;
    display: flex;
    gap: 26px;
}

.lift-main {
    width: 376px;
}

.sel-row {
    margin-top: 1px;
    display: flex;
    align-items: center;
}

.sel-lbl {
    width: 69px;
    padding-left: 2px;
    white-space: nowrap;
}

.c-sel {
    width: 306px;
}

.combo-val.sel {
    background: #0a246a;
    color: #fff;
}

.lift-btns {
    margin: 11px 0 0 9px;
    height: 27px;
    display: flex;
}

.b-insert { width: 91px; }
.b-delete { margin-left: 50px; width: 95px; }

.move-btns {
    margin-left: 61px;
    width: 68px;
    display: flex;
    flex-direction: column;
    gap: 1px;
}

.move-btns .btn {
    height: 13px;
    line-height: 11px;
}

.p-layout {
    margin-top: 6px;
    height: 403px;
}

.s-layout {
    margin: 7px 0 0 131px;
    width: 96px;
    height: 23px;
}

.north {
    margin: 2px 0 0 131px;
    width: 96px;
    text-align: center;
}

.plan {
    position: relative;
    height: 269px;
}

.piece {
    position: absolute;
}

.well {
    background: repeating-conic-gradient(#fff 0 25%, #d4d0c8 0 50%) 0 0 / 2px 2px;
    text-align: center;
}

.bstrip {
    width: 128px;
    height: 16px;
    background: #bebebe;
    font-size: 12px;
    line-height: 16px;
    text-align: center;
    white-space: nowrap;
    text-shadow: 1px 1px 2px #555;
}

.bstrip.vert {
    width: 21px;
    height: 102px;
    font-size: 11.300px;
    line-height: 21px;
    writing-mode: vertical-rl;
    transform: rotate(180deg);
}

.bstrip.blue {
    background: linear-gradient(#bebebe 0 6px, #00aeef 6px 10px, #bebebe 10px 12px, #00aeef 12px 15px, #bebebe 15px);
}

.upright {
    writing-mode: vertical-rl;
    text-orientation: upright;
    line-height: 13px;
    font-size: 11px;
    letter-spacing: 0.600px;
}

.pc-nboard { left: 87px; top: 7px; width: 192px; height: 26px; }
.pc-nrail { left: 113px; top: 36px; width: 153px; height: 18px; line-height: 16px; }
.pc-wboard { left: 42px; top: 40px; width: 32px; height: 166px; }
.pc-wrail { left: 81px; top: 54px; width: 20px; height: 132px; padding-top: 13px; }
.pc-wtrans { left: 111px; top: 70px; width: 23px; height: 97px; }
.pc-nledger { left: 135px; top: 57px; width: 104px; height: 22px; }
.pc-deck { left: 140px; top: 85px; width: 95px; height: 71px; }
.pc-sledger { left: 135px; top: 161px; width: 104px; height: 23px; }
.pc-etrans { left: 240px; top: 70px; width: 23px; height: 97px; }
.pc-erail { left: 269px; top: 53px; width: 20px; height: 132px; align-items: flex-start; padding-top: 14px; }
.pc-eboard { left: 296px; top: 40px; width: 32px; height: 166px; }
.pc-srail { left: 104px; top: 187px; width: 153px; height: 17px; }
.pc-sboard { left: 87px; top: 213px; width: 192px; height: 26px; }
.pc-west { left: 6px; top: 112px; }
.pc-east { left: 336px; top: 112px; }
.pc-south { left: 165px; top: 249px; }

.pc-wrail .upright,
.pc-erail .upright {
    display: block;
    margin: 0 auto;
    width: 13px;
}

.mat-grid {
    padding-left: 36px;
    display: grid;
    grid-template-columns: 117px 178px;
    grid-auto-rows: 20px;
    row-gap: 15px;
}

.m-deck { padding-top: 9px; }
.m-rail { padding-top: 4px; }

.lift-side {
    width: 195px;
}

.p-dims {
    width: 193px;
    height: 203px;
    padding-right: 2px;
}

.s-dims {
    margin: 11px 0 0 42px;
    width: 96px;
    height: 25px;
}

.dim-row {
    padding-left: 15px;
    display: grid;
    grid-template-columns: 75px 77px;
    grid-template-rows: 23px;
}

.dim-row > :first-child {
    margin-top: 6px;
}

.d-deck { margin-top: 5px; }
.d-lift { margin-top: 14px; grid-template-rows: 20px; }
.d-len { margin-top: 14px; }
.d-wid { margin-top: 23px; }
.d-lift > :first-child { margin-top: 7px; }
.d-len > :first-child { margin-top: 12px; }

.p-stage {
    margin-top: 14px;
    width: 193px;
    height: 126px;
    padding-right: 2px;
}

.s-stage {
    margin: 6px 0 0 11px;
    width: 163px;
}

.stage-row {
    margin-top: 11px;
    padding-left: 14px;
    display: grid;
    grid-template-columns: 60px 102px;
}

.stage-row > :first-child {
    margin-top: 3px;
}

.b-ok {
    margin: 95px 0 0 108px;
    width: 87px;
    height: 36px;
    outline: 1px solid #404040;
    outline-offset: -1px;
    border-width: 2px;
}
```
